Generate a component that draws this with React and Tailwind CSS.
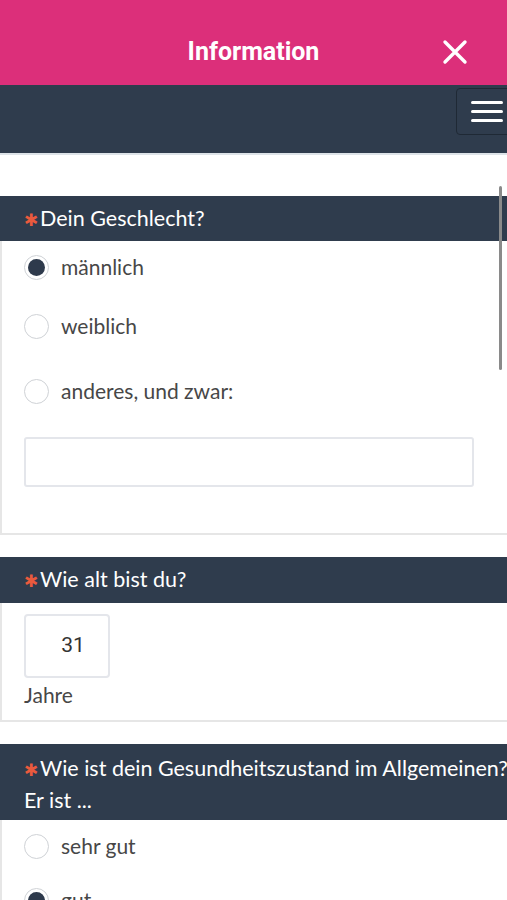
import React from "react";

function Radio({ checked, label }) {
  return (
    <div className="flex h-[36px] items-center">
      <span className="flex h-[25px] w-[25px] shrink-0 items-center justify-center rounded-full border border-[#cfd2d6] bg-white">
        {checked && <span className="h-[17px] w-[17px] rounded-full bg-[#2e3a4c]" />}
      </span>
      <span className="ml-[12px] text-[21px] text-[#474747]">{label}</span>
    </div>
  );
}

function Star() {
  return <span className="mr-[2px] text-[17px] text-[#ea5a3d]">✱</span>;
}

export default function App() {
  return (
    <div className="relative h-[900px] overflow-hidden bg-white font-['Lato','Liberation_Sans',sans-serif]">
      <header className="grid h-[85px] grid-cols-[1fr_auto_1fr] items-center bg-[#dc2f7a] px-[24px] pt-[18px]">
        <div />
        <h1 className="font-['Roboto','Liberation_Sans',sans-serif] text-[25px] font-bold text-white">
          Information
        </h1>
        <div className="flex justify-end pr-[15px]">
          <svg width="26" height="26" viewBox="0 0 26 26" className="text-white">
            <path d="M3 3 L23 23 M23 3 L3 23" stroke="currentColor" strokeWidth="3.4" strokeLinecap="round" />
          </svg>
        </div>
      </header>

      <nav className="flex h-[70px] items-start justify-end border-b-2 border-[#dde3e8] bg-[#2f3c4d] pt-[3px]">
        <button className="flex h-[47px] w-[56px] translate-x-[5px] flex-col justify-center gap-[6px] rounded-[4px] border border-[#1f2935] bg-[#2f3c4d] pl-[14px] pr-[8px]">
          <span className="h-[3px] w-full rounded-full bg-white" />
          <span className="h-[3px] w-full rounded-full bg-white" />
          <span className="h-[3px] w-full rounded-full bg-white" />
        </button>
      </nav>

      <main className="pt-[41px]">
        <section className="border-b-2 border-l-2 border-[#e6e6e6]">
          <div className="-ml-[2px] h-[45px] bg-[#2f3c4d] px-[24px] pt-[7px] text-[21.5px] leading-[30px] text-white">
            <Star />Dein Geschlecht?
          </div>
          <div className="px-[22px] pb-[46px]">
            <div className="pt-[8px]">
              <Radio checked label="männlich" />
            </div>
            <div className="mt-[23px]">
              <Radio label="weiblich" />
            </div>
            <div className="mt-[29px]">
              <Radio label="anderes, und zwar:" />
            </div>
            <div className="mt-[28px] h-[50px] w-[450px] rounded-[3px] border-2 border-[#e4e6eb] bg-white" />
          </div>
        </section>

        <section className="mt-[22px] border-b-2 border-l-2 border-[#e6e6e6]">
          <div className="-ml-[2px] h-[46px] bg-[#2f3c4d] px-[24px] pt-[7px] text-[21.5px] leading-[30px] text-white">
            <Star />Wie alt bist du?
          </div>
          <div className="px-[22px] pb-[12px]">
            <div className="mt-[11px] flex h-[64px] w-[86px] items-center justify-center rounded-[4px] border-2 border-[#e4e6eb] pl-[12px] font-['Roboto','Liberation_Sans',sans-serif] text-[21px] text-[#333]">
              31
            </div>
            <div className="mt-[4px] text-[21px] leading-[26px] text-[#474747]">Jahre</div>
          </div>
        </section>

        <section className="mt-[22px] border-l-2 border-[#e6e6e6]">
          <div className="-ml-[2px] h-[76px] whitespace-nowrap bg-[#2f3c4d] px-[24px] pt-[9px] text-[21.5px] leading-[30px] text-white">
            <div>
              <Star />Wie ist dein Gesundheitszustand im Allgemeinen?
            </div>
            <div>Er ist ...</div>
          </div>
          <div className="px-[22px]">
            <div className="pt-[8px]">
              <Radio label="sehr gut" />
            </div>
            <div className="mt-[18px]">
              <Radio checked label="gut" />
            </div>
          </div>
        </section>
      </main>

      <div className="absolute right-[5px] top-[186px] h-[184px] w-[3px] rounded-full bg-[#8a8a8a]" />
    </div>
  );
}
